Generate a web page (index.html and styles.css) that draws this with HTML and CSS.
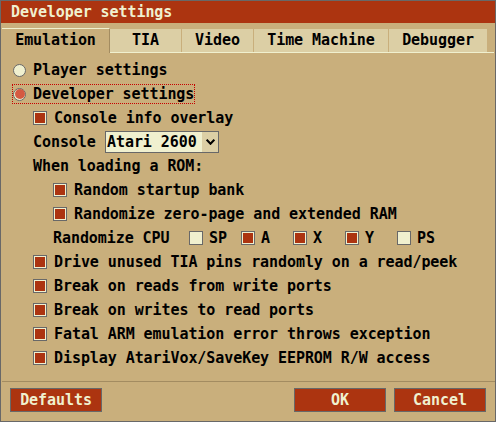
FILE: index.html
```html
<!DOCTYPE html>
<html>
<head>
<meta charset="utf-8">
<link rel="stylesheet" href="styles.css">
</head>
<body>
<div class="dialog">
  <div class="title">Developer settings</div>
  <div class="tabs">
    <div class="tab active w-emu">Emulation</div>
    <div class="tab w-tia">TIA</div>
    <div class="tab w-video">Video</div>
    <div class="tab w-tm">Time Machine</div>
    <div class="tab w-dbg">Debugger</div>
  </div>
  <div class="panel">
    <div class="row"><span class="radio"></span><span class="text">Player settings</span></div>
    <div class="row"><span class="focus"><span class="radio on"></span><span class="text">Developer settings</span></span></div>
    <div class="row ind1"><span class="check on"></span><span class="text">Console info overlay</span></div>
    <div class="row ind1"><span class="console-label">Console</span><span class="select"><span class="select-text">Atari 2600</span><span class="select-arrow"><svg width="9" height="6" viewBox="0 0 9 6"><polyline points="0.7,0.7 4.5,4.8 8.3,0.7" fill="none" stroke="#000" stroke-width="2"/></svg></span></span></div>
    <div class="row ind1">When loading a ROM:</div>
    <div class="row ind2"><span class="check on"></span><span class="text">Random startup bank</span></div>
    <div class="row ind2"><span class="check on"></span><span class="text">Randomize zero-page and extended RAM</span></div>
    <div class="row ind2"><span class="cpu-label">Randomize CPU</span><span class="reg"><span class="check"></span><span class="text">SP</span></span><span class="reg"><span class="check on"></span><span class="text">A</span></span><span class="reg"><span class="check on"></span><span class="text">X</span></span><span class="reg"><span class="check on"></span><span class="text">Y</span></span><span class="reg"><span class="check"></span><span class="text">PS</span></span></div>
    <div class="row ind1"><span class="check on"></span><span class="text">Drive unused TIA pins randomly on a read/peek</span></div>
    <div class="row ind1"><span class="check on"></span><span class="text">Break on reads from write ports</span></div>
    <div class="row ind1"><span class="check on"></span><span class="text">Break on writes to read ports</span></div>
    <div class="row ind1"><span class="check on"></span><span class="text">Fatal ARM emulation error throws exception</span></div>
    <div class="row ind1"><span class="check on"></span><span class="text">Display AtariVox/SaveKey EEPROM R/W access</span></div>
  </div>
  <div class="separator"></div>
  <div class="buttons">
    <div class="button">Defaults</div>
    <div class="spacer"></div>
    <div class="button">OK</div>
    <div class="button">Cancel</div>
  </div>
</div>
</body>
</html>
```

FILE: styles.css
```css
html, body {
  margin: 0;
  padding: 0;
  background: #c9af7c;
}
.dialog {
  width: 496px;
  height: 422px;
  box-sizing: border-box;
  border: 1px solid #686868;
  background: #c9af7c;
  display: flex;
  flex-direction: column;
  font-family: "DejaVu Sans Mono", monospace;
  font-weight: bold;
  font-size: 15px;
  letter-spacing: -0.07px;
  color: #000;
}
.title {
  height: 22px;
  line-height: 22px;
  padding-left: 10px;
  background: #ac3410;
  color: #f0f0cf;
  white-space: pre;
}
.tabs {
  display: flex;
  align-items: flex-start;
  height: 24px;
  margin: 5px 1px 0 1px;
  border-bottom: 1px solid #f0f0cf;
}
.tab {
  box-sizing: border-box;
  height: 23px;
  margin-top: 1px;
  line-height: 23px;
  text-align: center;
  background: #dccfa5;
  white-space: pre;
}
.tab + .tab {
  margin-left: 1px;
}
.tab.active + .tab {
  margin-left: 0;
}
.tab.active {
  height: 25px;
  margin-top: 0;
  margin-bottom: -1px;
  background: #c9af7c;
  border-top: 1px solid #f0f0cf;
  border-right: 1px solid #a38c61;
  line-height: 23px;
}
.w-emu { width: 108px; }
.w-tia { width: 71px; }
.w-video { width: 71px; }
.w-tm { width: 134px; }
.w-dbg { width: 98px; }

.panel {
  padding: 5px 0 0 12px;
  display: flex;
  flex-direction: column;
}
.row {
  height: 24px;
  line-height: 24px;
  display: flex;
  align-items: center;
  white-space: pre;
}
.ind1 { margin-left: 20px; }
.ind2 { margin-left: 40px; }

.radio {
  width: 13px;
  height: 13px;
  box-sizing: border-box;
  border-radius: 50%;
  border: 1px solid #686868;
  background: #f0f0cf;
  display: flex;
  align-items: center;
  justify-content: center;
  flex: none;
}
.radio.on::after {
  content: "";
  width: 10px;
  height: 10px;
  border-radius: 50%;
  background: #d55941;
}
.radio + .text {
  margin-left: 7px;
}
.focus {
  display: flex;
  align-items: center;
  height: 20px;
  box-sizing: border-box;
  margin-left: -1px;
  border: 1px dotted #c80000;
  padding-right: 0;
}
.check {
  width: 14px;
  height: 14px;
  box-sizing: border-box;
  border: 1px solid #686868;
  background: #f0f0cf;
  padding: 1px;
  flex: none;
  display: flex;
}
.check.on::after {
  content: "";
  flex: 1;
  background: #ac3410;
}
.check + .text {
  margin-left: 7px;
}
.console-label {
  width: 72px;
}
.select {
  width: 114px;
  height: 22px;
  box-sizing: border-box;
  border: 1px solid #686868;
  background: #f0f0cf;
  display: flex;
  line-height: 20px;
}
.select-text {
  flex: 1;
  padding-left: 1px;
}
.select-arrow {
  width: 16px;
  background: #dccfa5;
  display: flex;
  align-items: center;
  justify-content: center;
}
.cpu-label {
  width: 136px;
}
.reg {
  width: 52px;
  display: flex;
  align-items: center;
}
.reg .check + .text {
  margin-left: 6px;
}
.separator {
  height: 1px;
  margin: 11px 0 0 1px;
  background: #a38c61;
}
.buttons {
  display: flex;
  padding: 6px 9px 0 9px;
  gap: 8px;
}
.spacer {
  flex: 1;
}
.button {
  width: 92px;
  height: 24px;
  box-sizing: border-box;
  border: 1px solid #686868;
  background: #ac3410;
  color: #f0f0cf;
  line-height: 22px;
  text-align: center;
}
```
